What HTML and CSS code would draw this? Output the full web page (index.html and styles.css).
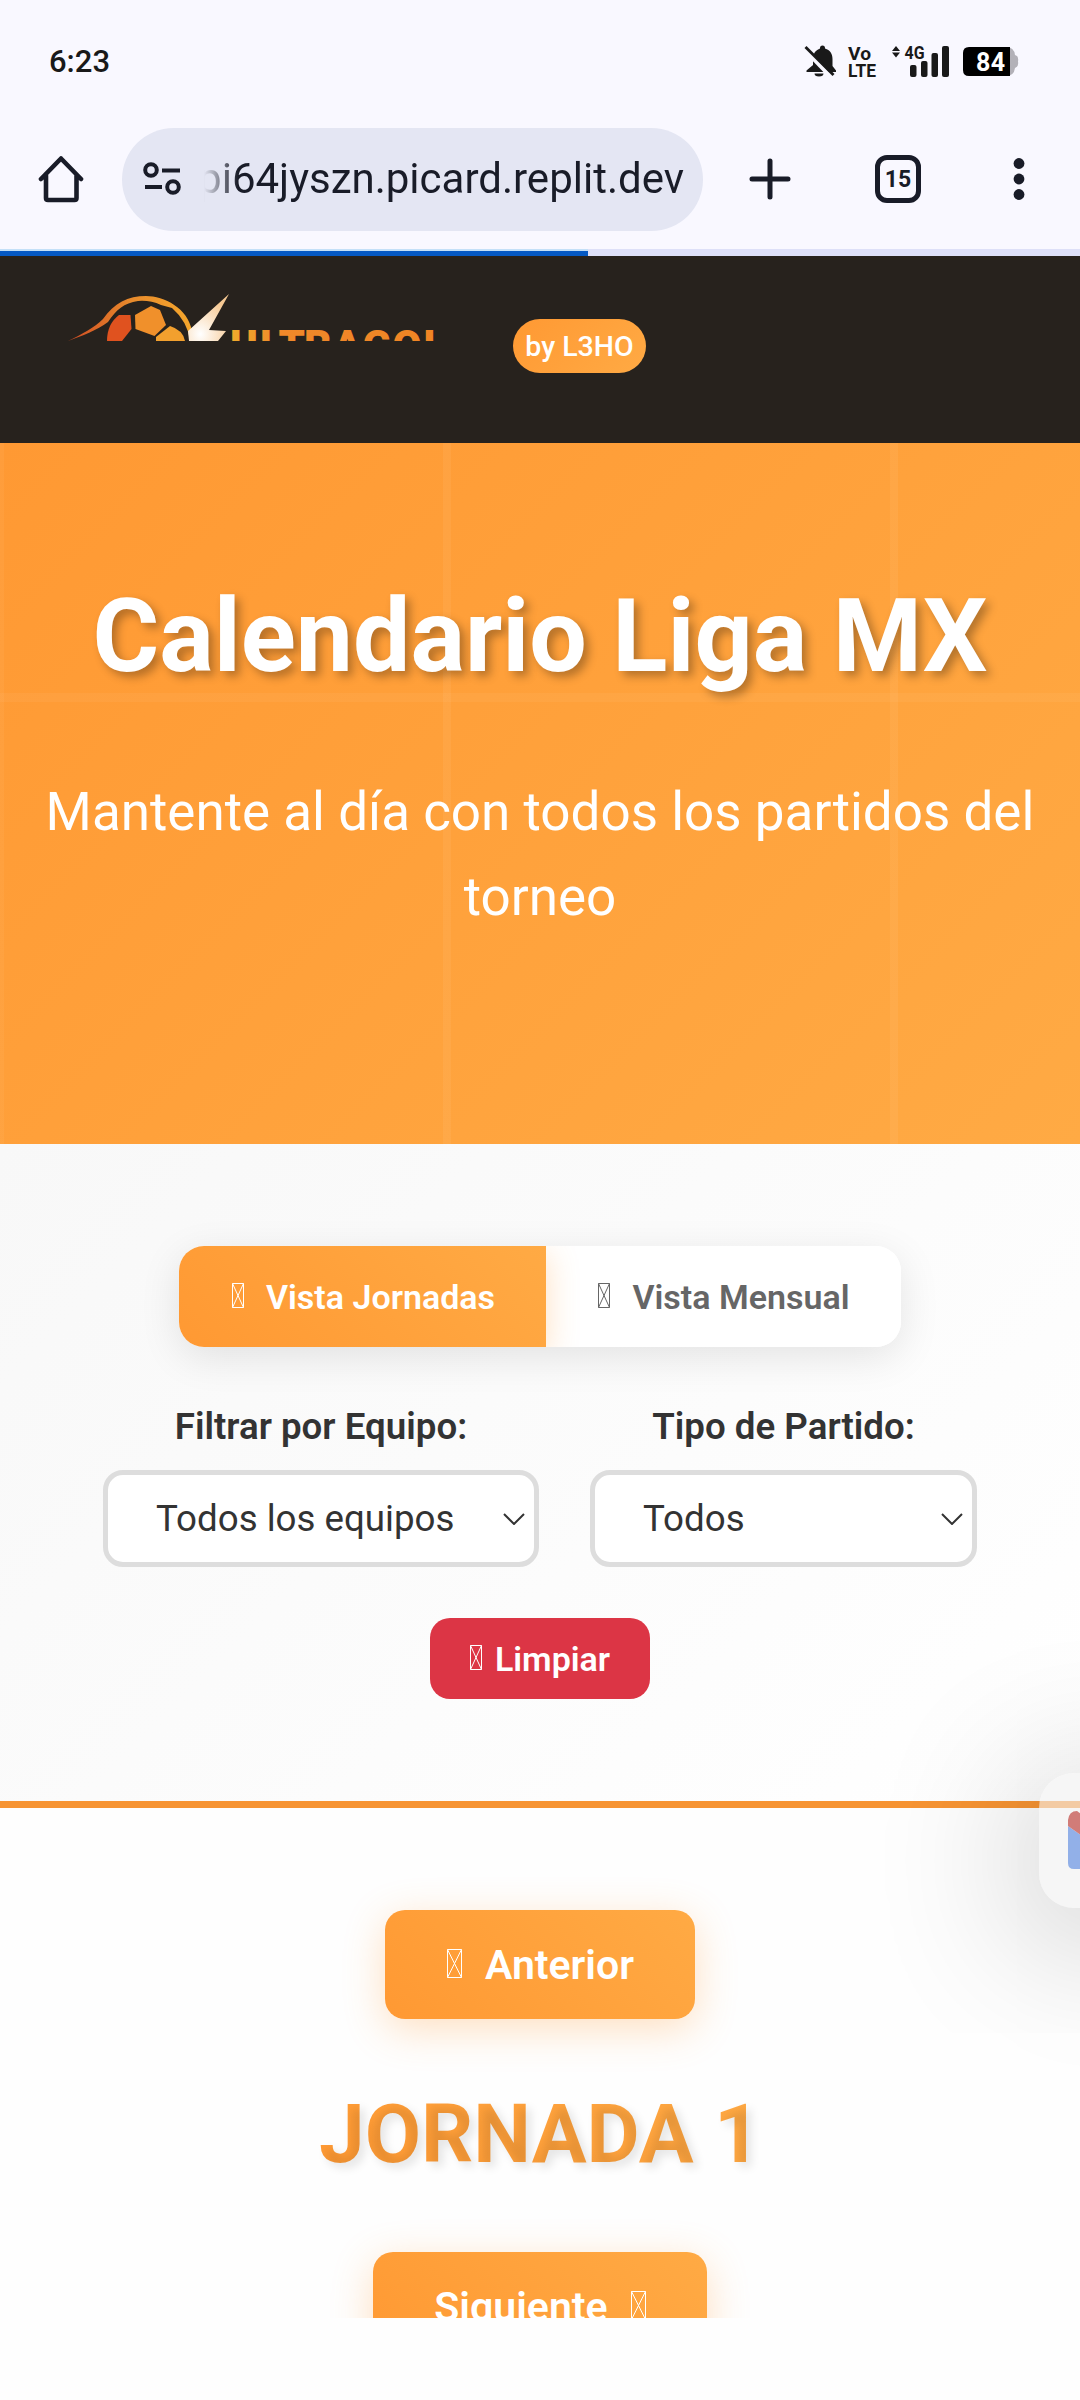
FILE: index.html
```html
<!DOCTYPE html>
<html lang="es">
<head>
<meta charset="utf-8">
<title>Calendario Liga MX</title>
<link rel="stylesheet" href="styles.css">
</head>
<body>
<div class="screen">
  <div class="statusbar">
    <span class="clock">6:23</span>
    <svg class="status-icons" width="224" height="50" viewBox="0 -10 224 50">
      <g fill="#191919">
        <path d="M12 27V17c0-6 3-9 7-10.500V6a2.500 2.500 0 0 1 5 0v.5c5 1.500 7.500 5 7.500 10.500v7l3.500 4.500v1.500H5.500V28.500L12 23z" transform="translate(-3 -3)"/>
        <path d="M10.500 28.500h9a4.500 3 0 0 1-9 0z"/>
        <path d="M2 6 28 33" stroke="#f9f8ff" stroke-width="4"/>
        <path d="M1.500 2 29.500 30" stroke="#191919" stroke-width="2.800"/>
        <path d="M88 6 92 1l4 5zM88 7.500 92 12.500l4-5z"/>
        <rect x="106" y="20" width="6.500" height="12" rx="2"/><rect x="117" y="16" width="6.500" height="16" rx="2"/><rect x="127.500" y="8" width="6.500" height="24" rx="2"/><rect x="138" y="1" width="7" height="31" rx="2"/>
      </g>
      <path d="M202 2q8 0 9 8q4 1 3 6.500q1 5-3 6.500q-1 8-9 8h-8V2z" fill="#b3b1b8"/>
      <path d="M165 2h41v29h-41q-6 0-6-6V8q0-6 6-6z" fill="#000"/>
      <g fill="#191919" font-family="Roboto, sans-serif" font-weight="700">
        <text x="44" y="15" font-size="18.500" textLength="23" lengthAdjust="spacingAndGlyphs">Vo</text>
        <text x="44" y="32" font-size="18" textLength="28" lengthAdjust="spacingAndGlyphs">LTE</text>
        <text x="100.500" y="14" font-size="17.500" textLength="20" lengthAdjust="spacingAndGlyphs">4G</text>
        <text x="172" y="25.500" font-size="25" textLength="29" fill="#fff">84</text>
      </g>
    </svg>
  </div>
  <div class="toolbar">
    <svg class="home" width="46" height="48" viewBox="0 0 46 48" fill="none" stroke="#191c28" stroke-width="4.600" stroke-linejoin="round" stroke-linecap="round"><path d="M3 24 23 3.500l20 20.500M8 20.500v22.500q0 2 2 2h26.500q2 0 2-2V20.500"/></svg>
    <div class="omnibox">
      <svg width="38" height="34" viewBox="0 0 38 34" fill="none" stroke="#191c28" stroke-width="4"><circle cx="8" cy="8" r="5.800"/><path d="M19 8.500h18M2 25h17"/><circle cx="30" cy="25" r="5.800"/></svg>
      <div class="url"><span>pi64jyszn.picard.replit.dev</span></div>
    </div>
    <svg class="plus" width="42" height="42" viewBox="0 0 42 42" stroke="#191c28" stroke-width="5" stroke-linecap="round"><path d="M21 3v36M3 21h36"/></svg>
    <div class="tabs">15</div>
    <svg class="dots" width="12" height="44" viewBox="0 0 12 44" fill="#191c28"><circle cx="6" cy="6.500" r="5.400"/><circle cx="6" cy="22" r="5.400"/><circle cx="6" cy="37.500" r="5.400"/></svg>
  </div>
  <div class="progress"><div class="progress-value"></div></div>

  <header class="site-header">
    <svg class="logo" width="380" height="49" viewBox="0 0 380 49">
      <defs>
        <linearGradient id="arc" x1="0" x2="1"><stop offset="0" stop-color="#cf4a22"/><stop offset=".5" stop-color="#e88a2c"/><stop offset="1" stop-color="#f5a72c"/></linearGradient>
        <radialGradient id="bolt" cx=".3" cy=".85" r=".8"><stop offset="0" stop-color="#fff"/><stop offset="1" stop-color="#f6c993"/></radialGradient>
        <linearGradient id="word" gradientUnits="userSpaceOnUse" x1="170" x2="375" y1="0" y2="0"><stop offset="0" stop-color="#f0ac2c"/><stop offset=".25" stop-color="#f0882a"/><stop offset="1" stop-color="#f08524"/></linearGradient>
      </defs>
      <path d="M8 49C22 42 34 36 43 27C54 11 68 4 86 4C104 4 128 16 132 39L130 48Q127 29 112 16L101 13Q90 8 78 9C64 11 56 18 48 30C37 38 22 44 8 49z" fill="url(#arc)"/>
      <path d="M59 23h11.500l1 14L62 49H47q0-17 12-26z" fill="#e0521f"/>
      <path d="M75 23 91 14l9 4 6 15-11.500 11-19-7z" fill="#f0902b"/>
      <path d="M96 45 110 34q13 4 15 15H96z" fill="#f2a02e"/>
      <path d="M169 2 149 38l17 1-8 10h-29l-1-10z" fill="url(#bolt)"/>
      <text y="67.500" x="170 200 218.500 244 273 302.500 332.500 363.500" class="wordmark" fill="url(#word)">ULTRAGOL</text>
    </svg>
    <span class="badge">by L3HO</span>
  </header>

  <section class="hero">
    <h1>Calendario Liga MX</h1>
    <p>Mantente al día con todos los partidos del torneo</p>
  </section>

  <section class="filters">
    <div class="view-toggle">
      <button class="toggle active"><svg class="tofu" width="12" height="25" viewBox="0 0 12 25"><path d="M.5.5h11v24H.5zM.5.5l11 24M11.500.5l-11 24"/></svg>Vista Jornadas</button>
      <button class="toggle"><svg class="tofu" width="12" height="25" viewBox="0 0 12 25"><path d="M.5.5h11v24H.5zM.5.5l11 24M11.500.5l-11 24"/></svg>Vista Mensual</button>
    </div>
    <div class="filter-row">
      <div class="field team"><label>Filtrar por Equipo:</label>
        <div class="select">Todos los equipos<svg width="22" height="12" viewBox="0 0 22 12"><path d="M1 1l10 10L21 1"/></svg></div></div>
      <div class="field type"><label>Tipo de Partido:</label>
        <div class="select">Todos<svg width="22" height="12" viewBox="0 0 22 12"><path d="M1 1l10 10L21 1"/></svg></div></div>
    </div>
    <button class="clear"><svg class="tofu" width="12" height="25" viewBox="0 0 12 25"><path d="M.5.5h11v24H.5zM.5.5l11 24M11.500.5l-11 24"/></svg>Limpiar</button>
  </section>

  <section class="rounds">
    <button class="nav prev"><svg class="tofu" width="15" height="29" viewBox="0 0 15 29"><path d="M.5.5h14v28H.5zM.5.5l14 28M14.500.5l-14 28"/></svg>Anterior</button>
    <h2>JORNADA 1</h2>
    <button class="nav next">Siguiente<svg class="tofu" width="15" height="29" viewBox="0 0 15 29"><path d="M.5.5h14v28H.5zM.5.5l14 28M14.500.5l-14 28"/></svg></button>
  </section>

  <div class="edge-panel">
    <svg width="60" height="58" viewBox="0 0 60 58"><path d="M0 15 14 25v33H6q-6 0-6-6z" fill="#92b0e8"/><path d="M0 15V9Q1 0 9 0l21 16v20z" fill="#d17c78"/></svg>
  </div>
</div>
</body>
</html>
```
FILE: styles.css
```css
* { box-sizing: border-box; }
body { margin: 0; font-family: Roboto, "Liberation Sans", sans-serif; background: #fefefe; }
button { border: 0; font-family: inherit; padding: 0; }
.screen { position: relative; width: 1080px; height: 2400px; overflow: hidden; }
.statusbar { height: 127px; padding: 35px 52px 0 49px; background: #f9f8ff; display: flex; justify-content: space-between; }
.clock { margin-top: 10px; font-size: 31px; font-weight: 500; line-height: 34px; color: #191919; }
.toolbar { height: 122px; padding: 0 54px 18px 38px; background: #f9f8ff; display: flex; align-items: center; }
.omnibox { margin-left: 38px; width: 581px; height: 103px; border-radius: 52px; background: #e4e6f3; display: flex; align-items: center; padding-left: 21px; }
.url { margin-left: 23px; width: 480px; height: 60px; overflow: hidden; display: flex; justify-content: flex-end; white-space: nowrap; font-size: 42px; line-height: 60px; color: #191c28; -webkit-mask-image: linear-gradient(90deg, transparent, #000 34px); mask-image: linear-gradient(90deg, transparent, #000 34px); }
.plus { margin-left: 46px; }
.tabs { margin-left: 84px; width: 46px; height: 48px; border: 5px solid #191c28; border-radius: 12px; font-size: 23px; font-weight: 700; line-height: 39px; text-align: center; color: #191c28; }
.dots { margin-left: 92px; }
.progress { height: 7px; background: #dee0f8; }
.progress-value { width: 588px; height: 7px; background: #0559c4; border-top: 2px solid #c4e0f8; }
.site-header { height: 187px; background: #27221d; display: flex; align-items: flex-start; padding: 36px 60px; }
.logo { display: block; }
.wordmark { font-family: Roboto, sans-serif; font-weight: 900; font-size: 42px; }
.badge { margin: 27px 0 0 73px; width: 133px; height: 54px; border-radius: 27px; background: linear-gradient(135deg, #ff9933, #ffaa44); color: #fff; font-size: 28.5px; font-weight: 500; line-height: 55px; text-align: center; white-space: nowrap; }
.hero { height: 701px; padding: 132px 40px 0; text-align: center; color: #fff; background: linear-gradient(rgba(255,255,255,.04), rgba(255,255,255,.04)) 0 0 / 4px 100% no-repeat, linear-gradient(90deg, rgba(255,255,255,.05), rgba(255,255,255,.05)) 443px 0 / 8px 100% no-repeat, linear-gradient(90deg, rgba(255,255,255,.05), rgba(255,255,255,.05)) 890px 0 / 8px 100% no-repeat, linear-gradient(rgba(255,255,255,.045), rgba(255,255,255,.045)) 0 250px / 100% 9px no-repeat, linear-gradient(135deg, #ff9933, #ffaa44); }
h1 { margin: 0; font-size: 102px; line-height: 122px; font-weight: 700; text-shadow: 5px 5px 10px rgba(0,0,0,.3); white-space: nowrap; }
.hero p { margin: 73px 0 0; font-size: 53px; line-height: 85px; }
.filters { height: 664px; padding: 102px 0 0; background: linear-gradient(135deg, #f8f8f8, #fff); border-bottom: 7px solid #f79433; display: flex; flex-direction: column; align-items: center; }
.view-toggle { display: flex; width: 722px; height: 101px; border-radius: 25px; background: #fff; overflow: hidden; box-shadow: 0 10px 40px rgba(0,0,0,.1); }
.toggle { display: flex; align-items: center; justify-content: center; gap: 22px; flex: 1; background: #fff; color: #666; font-size: 34px; font-weight: 600; padding-left: 1px; }
.toggle.active { flex: 0 0 367px; position: relative; background: linear-gradient(45deg, #ff9933, #ffaa44); color: #fff; box-shadow: 0 8px 30px rgba(255,153,51,.3); padding-left: 2px; }
.tofu { fill: none; stroke: currentColor; stroke-width: 1; flex: none; margin-bottom: 2px; }
.filter-row { display: flex; gap: 51px; margin-top: 55px; }
.field { display: flex; flex-direction: column; align-items: center; }
.team { width: 436px; }
.type { width: 387px; }
.field label { font-size: 36.7px; font-weight: 600; line-height: 50px; color: #333; margin-bottom: 18px; }
.select { width: 100%; height: 97px; border: 5px solid #ddd; border-radius: 20px; background: #fff; padding: 0 9px 0 48px; font-size: 36.7px; color: #333; display: flex; align-items: center; justify-content: space-between; }
.select svg { fill: none; stroke: #333; stroke-width: 2; }
.clear { margin-top: 51px; width: 220px; height: 81px; border-radius: 20px; background: #dc3545; color: #fff; font-size: 34px; font-weight: 600; display: flex; align-items: center; justify-content: center; gap: 13px; }
.rounds { height: 510px; overflow: hidden; padding-top: 102px; background: #fefefe; display: flex; flex-direction: column; align-items: center; }
.nav { flex: none; height: 109px; border-radius: 20px; background: linear-gradient(45deg, #ff9933, #ffaa44); color: #fff; font-size: 41px; font-weight: 600; box-shadow: 0 10px 40px rgba(255,153,51,.3); display: flex; align-items: center; justify-content: center; gap: 23px; }
.prev { width: 310px; padding-left: 1px; }
.next { width: 334px; }
h2 { margin: 61px 0 63px; font-size: 81.7px; line-height: 109px; font-weight: 700; white-space: nowrap; color: transparent; background: linear-gradient(45deg, #ff9933, #ffaa44); -webkit-background-clip: text; background-clip: text; text-shadow: 5px 5px 10px rgba(0,0,0,.1); }
.edge-panel { position: absolute; left: 1039px; top: 1773px; width: 130px; height: 135px; border-radius: 35px; background: rgba(240,240,240,.6); box-shadow: 0 20px 160px rgba(0,0,0,.3); padding: 38px 0 0 29px; }
```
